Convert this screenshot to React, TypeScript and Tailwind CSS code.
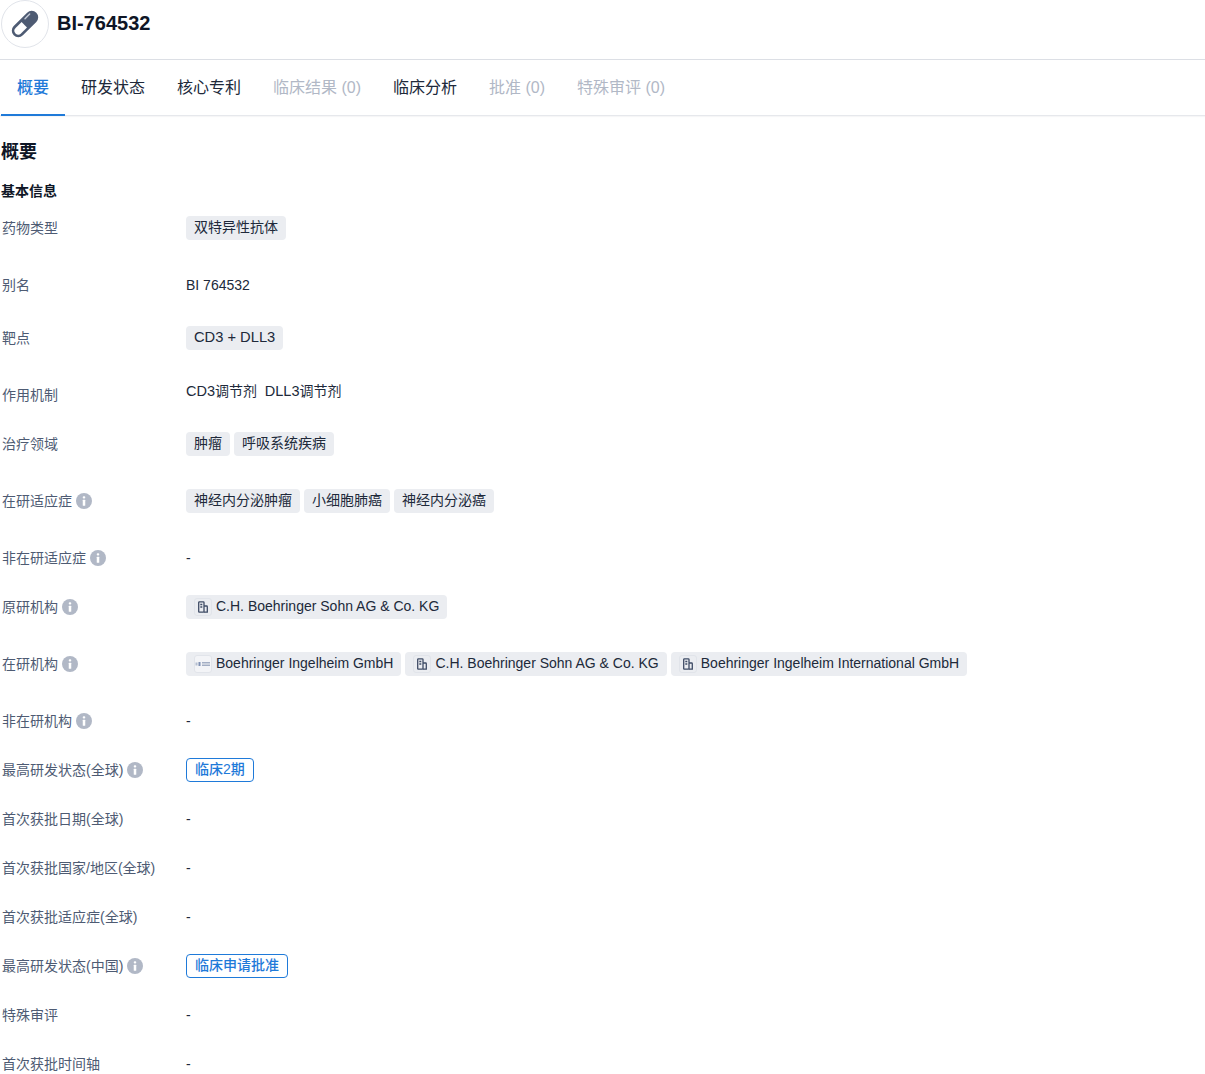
import { ReactNode } from "react";

const Info = () => (
  <svg width="16" height="16" viewBox="0 0 16 16" className="ml-1 shrink-0">
    <circle cx="8" cy="8" r="8" fill="#b1b8c6" />
    <rect x="6.75" y="3.25" width="2.5" height="2.25" rx="1" fill="#fff" />
    <rect x="6.75" y="6.75" width="2.5" height="6" rx="0.5" fill="#fff" />
  </svg>
);

const OrgIcon = () => (
  <span className="w-[18px] h-[18px] mr-1 rounded-[3px] border border-[#e1e4ea] flex items-center justify-center">
    <svg width="12" height="12" viewBox="0 0 12 12" fill="none" stroke="#3f4c66" strokeWidth="1.3">
      <rect x="1.7" y="0.8" width="5.3" height="10.4" rx="0.7" />
      <path d="M7 5h2.6a.7.7 0 0 1 .7.7v5.5H7M3.3 3.5h2M3.3 6h2" />
    </svg>
  </span>
);

const LogoIcon = () => (
  <span className="w-[18px] h-[18px] mr-1 rounded-[3px] border border-[#e1e4ea] bg-[#f3f4f7] flex items-center justify-center">
    <svg width="16" height="6" viewBox="0 0 16 6">
      <rect x="0.5" y="1.5" width="2" height="3" fill="#b4bdd0" />
      <rect x="3.5" y="1" width="2" height="4" fill="#7f90b3" />
      <rect x="7" y="1" width="8" height="1.5" fill="#a3aec4" />
      <rect x="7" y="3.5" width="8" height="1.5" fill="#a3aec4" />
    </svg>
  </span>
);

const Tag = ({ children, icon }: { children: ReactNode; icon?: ReactNode }) => (
  <span className="h-6 px-2 mr-1 flex items-center rounded-[4px] bg-[#ebedf1] text-[14px] text-[#20293a] whitespace-nowrap">
    {icon}
    <span className="-mt-0.5">{children}</span>
  </span>
);

const Status = ({ children }: { children: ReactNode }) => (
  <span className="h-6 px-2 flex items-center rounded-[4px] border border-[#1f7ad9] text-[14px] text-[#1f7ad9] font-medium whitespace-nowrap">
    <span className="-mt-0.5">{children}</span>
  </span>
);

const Row = ({
  label,
  info,
  h,
  children,
}: {
  label: string;
  info?: boolean;
  h: string;
  children: ReactNode;
}) => (
  <div className={`flex items-start ${h}`}>
    <div className="w-[186px] h-6 pl-[2px] flex items-center text-[14px] text-[#4e5b73] whitespace-nowrap">
      {label}
      {info && <Info />}
    </div>
    <div className="flex items-center h-6 text-[14px] text-[#20293a]">{children}</div>
  </div>
);

const tabs = [
  { t: "概要", active: true },
  { t: "研发状态" },
  { t: "核心专利" },
  { t: "临床结果 (0)", off: true },
  { t: "临床分析" },
  { t: "批准 (0)", off: true },
  { t: "特殊审评 (0)", off: true },
];

export default function App() {
  return (
    <div
      className="h-[1074px] overflow-hidden bg-white"
      style={{ fontFamily: '"Liberation Sans", "Noto Sans CJK SC", sans-serif' }}
    >
      <header className="h-[60px] flex items-center pl-px border-b border-[#dcdfe5]">
        <div className="w-12 h-12 -mt-3 rounded-full border border-[#e1e4ea] flex items-center justify-center">
          <svg width="34" height="34" viewBox="0 0 34 34">
            <g transform="rotate(-45 17 17)">
              <rect x="1" y="10.5" width="32" height="13" rx="6.5" fill="#4e5b73" />
              <path d="M16 13.2H7.5a3.8 3.8 0 0 0 0 7.6H16z" fill="#fff" />
              <rect x="20" y="12.6" width="8" height="1.4" rx="0.7" fill="#c6ccd8" />
            </g>
          </svg>
        </div>
        <h1 className="ml-2 -mt-[13px] text-[20px] font-bold text-[#0f1626]">BI-764532</h1>
      </header>

      <nav className="h-[56px] pl-px flex border-b border-[#e6e8ec] shadow-[0_1px_1px_rgba(20,30,50,0.04)]">
        {tabs.map((tab) => (
          <div
            key={tab.t}
            className={`px-4 pt-0.5 flex items-center text-[16px] whitespace-nowrap border-b-2 -mb-px ${
              tab.active
                ? "border-[#1f7ad9] text-[#1f7ad9] font-medium"
                : tab.off
                  ? "border-transparent text-[#b1b8c6]"
                  : "border-transparent text-[#20293a]"
            }`}
          >
            {tab.t}
          </div>
        ))}
      </nav>

      <h2 className="mt-[23px] pl-px text-[18px] leading-[26px] font-bold text-[#0f1626]">概要</h2>
      <h3 className="mt-[18px] pl-px text-[14px] leading-[16px] font-bold text-[#0f1626]">基本信息</h3>

      <div className="mt-[17px]">
        <Row label="药物类型" h="h-[57px]">
          <Tag>双特异性抗体</Tag>
        </Row>
        <Row label="别名" h="h-[53px]">
          BI 764532
        </Row>
        <Row label="靶点" h="h-[57px]">
          <Tag>
            <span className="text-[14.7px]">CD3 + DLL3</span>
          </Tag>
        </Row>
        <Row label="作用机制" h="h-[49px]">
          <span className="-mt-1.5 whitespace-pre">
            <span className="text-[14.5px]">CD3</span>调节剂  <span className="text-[14.5px]">DLL3</span>调节剂
          </span>
        </Row>
        <Row label="治疗领域" h="h-[57px]">
          <Tag>肿瘤</Tag>
          <Tag>呼吸系统疾病</Tag>
        </Row>
        <Row label="在研适应症" info h="h-[57px]">
          <Tag>神经内分泌肿瘤</Tag>
          <Tag>小细胞肺癌</Tag>
          <Tag>神经内分泌癌</Tag>
        </Row>
        <Row label="非在研适应症" info h="h-[49px]">
          -
        </Row>
        <Row label="原研机构" info h="h-[57px]">
          <Tag icon={<OrgIcon />}>C.H. Boehringer Sohn AG &amp; Co. KG</Tag>
        </Row>
        <Row label="在研机构" info h="h-[57px]">
          <Tag icon={<LogoIcon />}>Boehringer Ingelheim GmbH</Tag>
          <Tag icon={<OrgIcon />}>C.H. Boehringer Sohn AG &amp; Co. KG</Tag>
          <Tag icon={<OrgIcon />}>Boehringer Ingelheim International GmbH</Tag>
        </Row>
        <Row label="非在研机构" info h="h-[49px]">
          -
        </Row>
        <Row label="最高研发状态(全球)" info h="h-[49px]">
          <Status>临床2期</Status>
        </Row>
        <Row label="首次获批日期(全球)" h="h-[49px]">
          -
        </Row>
        <Row label="首次获批国家/地区(全球)" h="h-[49px]">
          -
        </Row>
        <Row label="首次获批适应症(全球)" h="h-[49px]">
          -
        </Row>
        <Row label="最高研发状态(中国)" info h="h-[49px]">
          <Status>临床申请批准</Status>
        </Row>
        <Row label="特殊审评" h="h-[49px]">
          -
        </Row>
        <Row label="首次获批时间轴" h="h-[49px]">
          -
        </Row>
      </div>
    </div>
  );
}
